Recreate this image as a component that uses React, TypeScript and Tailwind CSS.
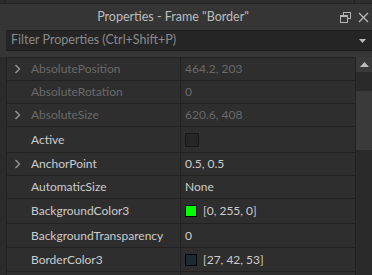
import React from "react";

type Row = {
  name: string;
  value?: string;
  disabled?: boolean;
  expand?: boolean;
  h: number;
  kind?: "check" | "color";
  color?: string;
};

const rows: Row[] = [
  { name: "AbsolutePosition", value: "464.2, 203", disabled: true, expand: true, h: 23 },
  { name: "AbsoluteRotation", value: "0", disabled: true, h: 23 },
  { name: "AbsoluteSize", value: "620.6, 408", disabled: true, expand: true, h: 23 },
  { name: "Active", kind: "check", h: 26 },
  { name: "AnchorPoint", value: "0.5, 0.5", expand: true, h: 23 },
  { name: "AutomaticSize", value: "None", h: 23 },
  { name: "BackgroundColor3", value: "[0, 255, 0]", kind: "color", color: "#00ff00", h: 25 },
  { name: "BackgroundTransparency", value: "0", h: 24 },
  { name: "BorderColor3", value: "[27, 42, 53]", kind: "color", color: "#1b2a35", h: 24 },
  { name: "", h: 24 },
];

function Chevron() {
  return (
    <svg width="7" height="10" viewBox="0 0 7 10" className="shrink-0">
      <path d="M1.5 1 L5.5 5 L1.5 9" fill="none" stroke="#9a9a9a" strokeWidth="1.3" />
    </svg>
  );
}

export default function App() {
  return (
    <div
      className="w-[372px] h-[275px] overflow-hidden bg-[#353535] text-[#cccccc] flex flex-col"
      style={{ fontFamily: "Lato, 'Open Sans', sans-serif" }}
    >
      {/* top strip (previous panel) */}
      <div className="h-[4px] flex shrink-0 border-b border-[#232323]">
        <div className="w-[6px] bg-[#2b2b2b] border-r border-[#222]" />
        <div className="w-[349px] bg-[#2e2e2e] border-r border-[#222]" />
        <div className="flex-1 bg-[#2e2e2e]" />
      </div>
      {/* title bar */}
      <div className="h-[26px] shrink-0 relative flex items-center justify-center pr-[26px]">
        <span className="text-[12.5px] text-[#bdbdbd]">Properties - Frame "Border"</span>
        <div className="absolute right-[3px] top-0 h-full flex items-center gap-[7px]">
          <svg width="11" height="11" viewBox="0 0 11 11">
            <rect x="3.5" y="0.5" width="7" height="6" fill="none" stroke="#b5b5b5" strokeWidth="1" />
            <rect x="0.5" y="3.5" width="7" height="7" fill="#353535" stroke="#b5b5b5" strokeWidth="1" />
            <line x1="0.5" y1="4.5" x2="7.5" y2="4.5" stroke="#b5b5b5" strokeWidth="1" />
          </svg>
          <svg width="11" height="11" viewBox="0 0 11 11">
            <path d="M1 1 L10 10 M10 1 L1 10" stroke="#b5b5b5" strokeWidth="1.4" />
          </svg>
        </div>
      </div>
      {/* filter bar */}
      <div className="ml-[6px] h-[21px] shrink-0 bg-[#252525] border-y border-[#1e1e1e] flex items-center pl-[5px] pr-[6px]">
        <span className="text-[12.5px] text-[#8a8a8a] flex-1">Filter Properties (Ctrl+Shift+P)</span>
        <svg width="7" height="4" viewBox="0 0 7 4">
          <path d="M0 0 L7 0 L3.5 4 Z" fill="#bdbdbd" />
        </svg>
      </div>
      <div className="h-[6px] shrink-0" />
      {/* list */}
      <div className="flex-1 flex min-h-0 bg-[#2e2e2e]">
        <div className="w-[6px] bg-[#2b2b2b] shrink-0" />
        <div className="w-[350px] shrink-0 border-l border-r border-[#222] border-t flex flex-col">
          {rows.map((r, i) => (
            <div
              key={i}
              className="flex shrink-0 border-b border-[#222]"
              style={{ height: r.h }}
            >
              <div className="w-[174px] shrink-0 border-r border-[#222] flex items-center pl-[7px]">
                <div className="w-[17px] shrink-0 flex items-center">{r.expand && <Chevron />}</div>
                {r.name && (
                  <span
                    className={
                      "text-[12px] whitespace-nowrap " + (r.disabled ? "text-[#6a6a6a]" : "text-[#cccccc]")
                    }
                  >
                    {r.name}
                  </span>
                )}
              </div>
              <div className="flex-1 flex items-center pl-[4px]">
                {r.kind === "check" && (
                  <div className="w-[14px] h-[14px] bg-[#262626] border border-[#1a1a1a]" />
                )}
                {r.kind === "color" && (
                  <div className="w-[12px] h-[12px] border border-black mr-[6px]" style={{ background: r.color }} />
                )}
                {r.value && (
                  <span
                    className={
                      "text-[12px] whitespace-nowrap " + (r.disabled ? "text-[#6a6a6a]" : "text-[#cccccc]")
                    }
                  >
                    {r.value}
                  </span>
                )}
              </div>
            </div>
          ))}
        </div>
        {/* scrollbar */}
        <div className="flex-1 flex flex-col bg-[#2a2a2a]">
          <div className="h-[16px] bg-[#3a3a3a] flex items-center justify-center border-b border-[#2a2a2a]">
            <svg width="9" height="5" viewBox="0 0 9 5">
              <path d="M0 5 L9 5 L4.5 0 Z" fill="#bdbdbd" />
            </svg>
          </div>
          <div className="h-[18px]" />
          <div className="h-[59px] bg-[#3a3a3a]" />
        </div>
      </div>
    </div>
  );
}
